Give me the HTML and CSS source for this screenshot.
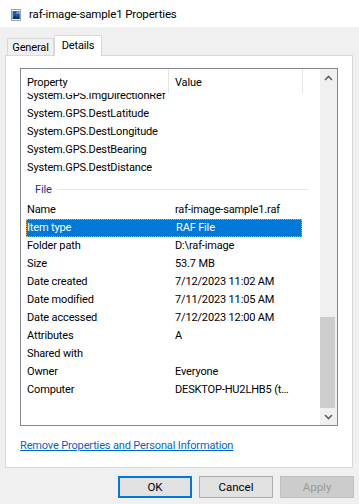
FILE: index.html
```html
<!DOCTYPE html>
<html lang="en">

<head>
    <meta charset="UTF-8">
    <meta name="viewport" content="width=device-width, initial-scale=1.0">
    <title>raf-image-sample1 Properties</title>
    <link rel="stylesheet" href="styles.css">
</head>

<body>

    <div class="window">
        <div class="titlebar">
            <svg class="title-icon" width="10" height="12" viewBox="0 0 10 12">
                <rect x="0.5" y="0.5" width="9" height="11" fill="#fff" stroke="#9aa3ad" />
                <rect x="1.5" y="2" width="7" height="8" fill="#1f5fae" />
                <path d="M1.5 10 L4 6 L6 8.5 L8.5 5 L8.5 10 Z" fill="#0c2f6b" />
                <rect x="5.5" y="2.5" width="2" height="2" fill="#8fc3f0" />
            </svg>
            <span class="title-text">raf-image-sample1 Properties</span>
        </div>

        <div class="tabs">
            <div class="tab">General</div>
            <div class="tab active">Details</div>
        </div>

        <div class="panel">
            <div class="listbox">
                <div class="list-main">
                    <div class="list-header">
                        <span class="head-prop">Property</span>
                        <span class="head-value">Value</span>
                        <span class="head-rest"></span>
                    </div>
                    <div class="list-viewport">
                        <div class="list-rows">
                            <div class="row"><span>System.GPS.ImgDirectionRef</span><span></span></div>
                            <div class="row"><span>System.GPS.DestLatitude</span><span></span></div>
                            <div class="row"><span>System.GPS.DestLongitude</span><span></span></div>
                            <div class="row"><span>System.GPS.DestBearing</span><span></span></div>
                            <div class="row"><span>System.GPS.DestDistance</span><span></span></div>
                            <div class="group"><span>File</span><span class="group-line"></span></div>
                            <div class="row"><span>Name</span><span>raf-image-sample1.raf</span></div>
                            <div class="row selected"><span>Item type</span><span>RAF File</span></div>
                            <div class="row"><span>Folder path</span><span>D:\raf-image</span></div>
                            <div class="row"><span>Size</span><span>53.7 MB</span></div>
                            <div class="row"><span>Date created</span><span>7/12/2023 11:02 AM</span></div>
                            <div class="row"><span>Date modified</span><span>7/11/2023 11:05 AM</span></div>
                            <div class="row"><span>Date accessed</span><span>7/12/2023 12:00 AM</span></div>
                            <div class="row"><span>Attributes</span><span>A</span></div>
                            <div class="row"><span>Shared with</span><span></span></div>
                            <div class="row"><span>Owner</span><span>Everyone</span></div>
                            <div class="row"><span>Computer</span><span>DESKTOP-HU2LHB5 (t…</span></div>
                        </div>
                    </div>
                </div>
                <div class="scrollbar">
                    <div class="sb-btn">
                        <svg width="9" height="6" viewBox="0 0 9 6">
                            <path d="M1 5 L4.5 1.5 L8 5" fill="none" stroke="#606060" stroke-width="1.6" />
                        </svg>
                    </div>
                    <div class="sb-track">
                        <div class="sb-thumb"></div>
                    </div>
                    <div class="sb-btn">
                        <svg width="9" height="6" viewBox="0 0 9 6">
                            <path d="M1 1 L4.5 4.5 L8 1" fill="none" stroke="#606060" stroke-width="1.6" />
                        </svg>
                    </div>
                </div>
            </div>
            <a href="#" class="remove-link">Remove Properties and Personal Information</a>
        </div>

        <div class="buttons">
            <button class="btn default">OK</button>
            <button class="btn">Cancel</button>
            <button class="btn disabled">Apply</button>
        </div>
    </div>

</body>

</html>
```

FILE: styles.css
```css
* {
    margin: 0;
    padding: 0;
    box-sizing: border-box;
}

body {
    font-family: Roboto, 'Liberation Sans', Arial, sans-serif;
    font-size: 11px;
    letter-spacing: -0.15px;
    color: #000;
    background-color: #f0f0f0;
}

.window {
    width: 359px;
    height: 504px;
    display: flex;
    flex-direction: column;
}

.titlebar {
    height: 27px;
    background-color: #fff;
    display: flex;
    align-items: center;
    padding-left: 11px;
}

.title-icon {
    margin-right: 8px;
    margin-top: 2px;
}

.title-text {
    font-size: 11.5px;
}

.tabs {
    height: 28px;
    display: flex;
    align-items: flex-end;
    padding-left: 7px;
}

.tab {
    width: 47px;
    height: 17px;
    border: 1px solid #d9d9d9;
    border-bottom: none;
    background-color: #f0f0f0;
    text-align: center;
    line-height: 17px;
}

.tab.active {
    width: 48px;
    height: 21px;
    margin-bottom: -1px;
    background-color: #fff;
    line-height: 19px;
    position: relative;
    z-index: 1;
}

.panel {
    height: 413px;
    margin: 0 6px 0 5px;
    background-color: #fff;
    border: 1px solid #d9d9d9;
    padding: 12px 13px 0 14px;
}

.listbox {
    width: 318px;
    height: 358px;
    border: 1px solid #828790;
    display: flex;
}

.list-main {
    flex: 1;
    display: flex;
    flex-direction: column;
}

.list-header {
    height: 24px;
    display: flex;
}

.list-header span {
    border-right: 1px solid #e5e5e5;
    line-height: 24px;
    padding: 2px 0 0 6px;
}

.head-prop {
    width: 148px;
}

.head-value {
    width: 134px;
}

.head-rest {
    flex: 1;
    border-right: none !important;
}

.list-viewport {
    flex: 1;
    overflow: hidden;
    padding-left: 5px;
}

.list-rows {
    margin-top: -6px;
}

.row {
    width: 276px;
    height: 18px;
    display: grid;
    grid-template-columns: 142px 134px;
    line-height: 18px;
    white-space: nowrap;
}

.row span:first-child {
    padding-left: 1px;
}

.row span:last-child {
    padding-left: 7px;
}

.row.selected {
    background-color: #0078d7;
    color: #fff;
    border: 1px dotted #f0a040;
    line-height: 16px;
}

.row.selected span:first-child {
    padding-left: 0;
}

.row.selected span:last-child {
    padding-left: 7px;
}

.group {
    height: 24px;
    display: flex;
    align-items: center;
    padding-left: 9px;
    margin-right: 12px;
    color: #1e3287;
}

.group-line {
    flex: 1;
    height: 1px;
    margin-left: 5px;
    background-color: #e2e8ef;
}

.scrollbar {
    width: 17px;
    background-color: #f0f0f0;
    display: flex;
    flex-direction: column;
}

.sb-btn {
    height: 17px;
    display: flex;
    align-items: center;
    justify-content: center;
}

.sb-track {
    flex: 1;
    display: flex;
    flex-direction: column;
    justify-content: flex-end;
}

.sb-thumb {
    height: 91px;
    margin: 0 2px 0 0;
    background-color: #cdcdcd;
}

.remove-link {
    display: block;
    margin-top: 12px;
    line-height: 16px;
    color: #0066cc;
    text-decoration: underline;
}

.buttons {
    display: flex;
    justify-content: flex-end;
    gap: 7px;
    padding: 8px 5px 0 0;
}

.btn {
    width: 74px;
    height: 22px;
    font-family: inherit;
    font-size: 11.5px;
    color: #000;
    background-color: #e1e1e1;
    border: 1px solid #adadad;
}

.btn.default {
    border: 2px solid #0078d7;
}

.btn.disabled {
    background-color: #cccccc;
    border-color: #bfbfbf;
    color: #9a9a9a;
}
```
